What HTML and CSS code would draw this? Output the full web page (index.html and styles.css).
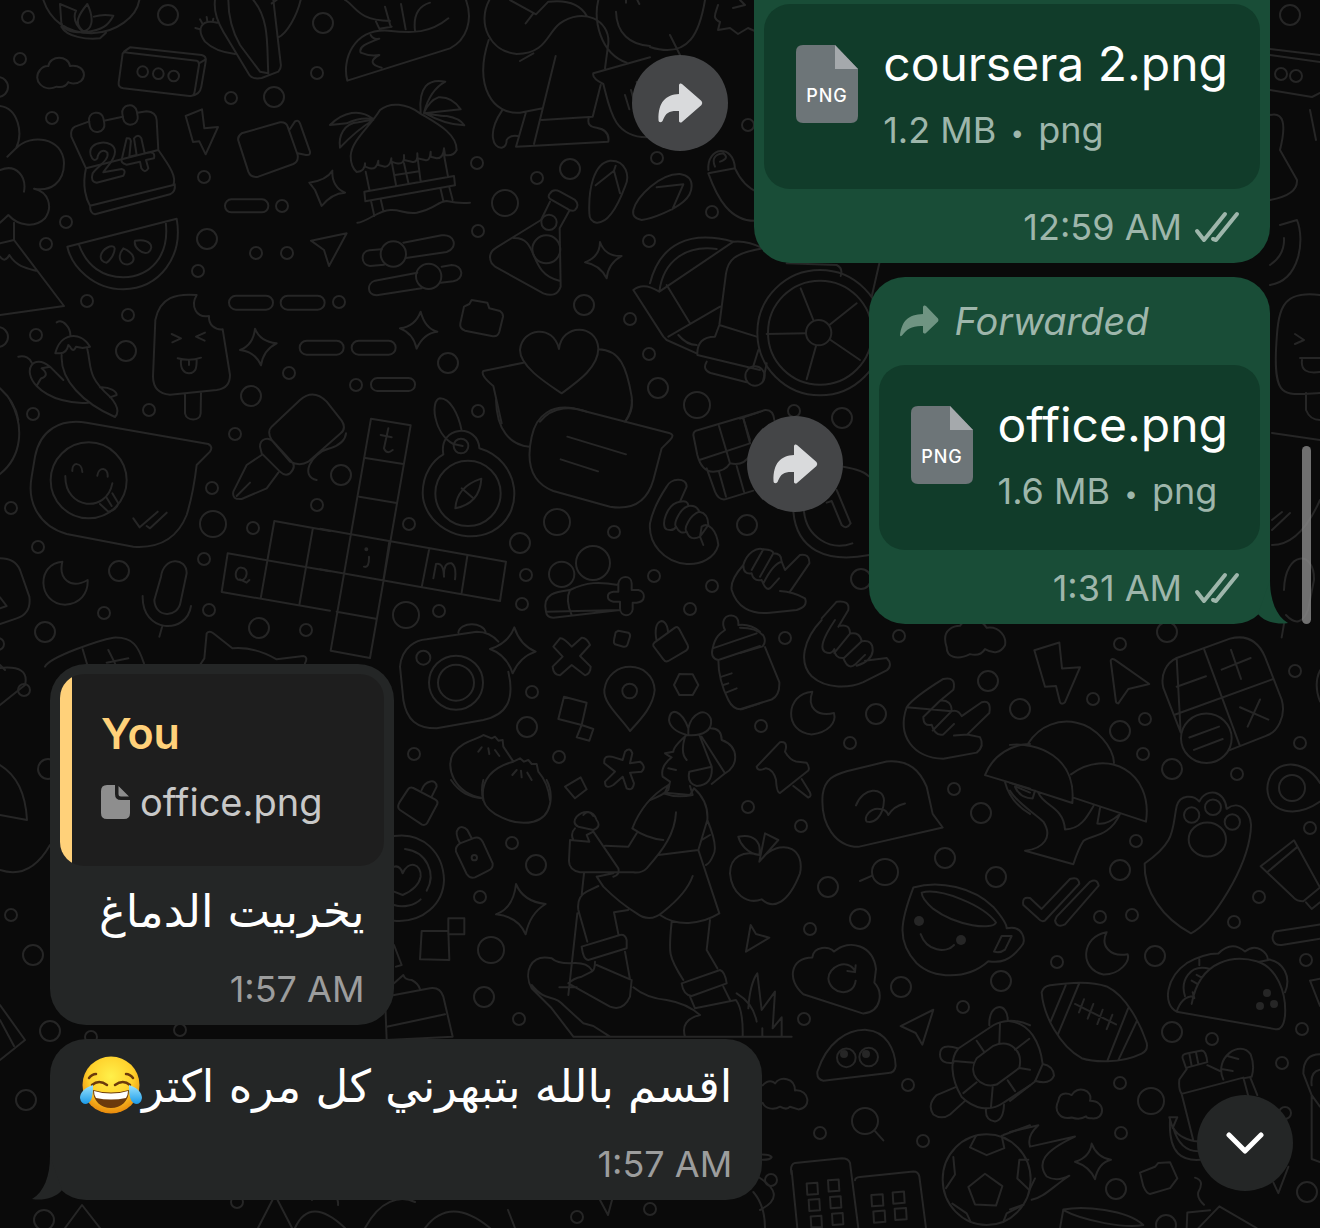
FILE: index.html
```
<!DOCTYPE html>
<html lang="en">
<head>
<meta charset="utf-8">
<meta name="viewport" content="width=device-width, initial-scale=1">
<title>Chat</title>
<link rel="stylesheet" href="styles.css">
</head>
<body>
<svg class="wallpaper" viewBox="0 0 1320 1228" preserveAspectRatio="xMidYMid slice" aria-hidden="true">
  <!-- confetti dots -->
  <g class="dots-small">
    <circle cx="28" cy="17"/><circle cx="20" cy="59"/><circle cx="52" cy="118"/><circle cx="231" cy="98"/><circle cx="204" cy="177"/><circle cx="66" cy="222"/><circle cx="46" cy="244"/><circle cx="198" cy="271"/><circle cx="87" cy="301"/><circle cx="128" cy="315"/><circle cx="36" cy="335"/><circle cx="33" cy="414"/><circle cx="149" cy="410"/><circle cx="289" cy="373"/><circle cx="317" cy="73"/><circle cx="256" cy="253"/><circle cx="287" cy="253"/><circle cx="282" cy="206"/>
    <circle cx="477" cy="163"/><circle cx="537" cy="178"/><circle cx="478" cy="231"/><circle cx="339" cy="302"/><circle cx="356" cy="385"/><circle cx="478" cy="411"/><circle cx="630" cy="319"/><circle cx="649" cy="354"/><circle cx="649" cy="241"/><circle cx="657" cy="158"/><circle cx="712" cy="212"/><circle cx="794" cy="411"/><circle cx="748" cy="125"/>
    <circle cx="235" cy="434"/><circle cx="11" cy="508"/><circle cx="212" cy="488"/><circle cx="253" cy="528"/><circle cx="38" cy="547"/><circle cx="204" cy="559"/><circle cx="104" cy="613"/><circle cx="209" cy="610"/><circle cx="306" cy="630"/><circle cx="317" cy="505"/><circle cx="-2" cy="644"/>
    <circle cx="409" cy="524"/><circle cx="526" cy="575"/><circle cx="522" cy="604"/><circle cx="439" cy="611"/><circle cx="614" cy="532"/><circle cx="654" cy="576"/><circle cx="712" cy="586"/><circle cx="690" cy="609"/><circle cx="532" cy="692"/><circle cx="414" cy="754"/><circle cx="559" cy="757"/><circle cx="512" cy="843"/><circle cx="480" cy="897"/><circle cx="519" cy="1019"/><circle cx="748" cy="807"/><circle cx="801" cy="826"/><circle cx="810" cy="929"/><circle cx="804" cy="1019"/>
    <circle cx="785" cy="638"/><circle cx="899" cy="636"/><circle cx="761" cy="726"/><circle cx="850" cy="743"/><circle cx="954" cy="789"/><circle cx="963" cy="1007"/><circle cx="908" cy="1085"/><circle cx="820" cy="1133"/><circle cx="923" cy="1141"/><circle cx="771" cy="1180"/>
    <circle cx="1120" cy="644"/><circle cx="1093" cy="699"/><circle cx="1145" cy="719"/><circle cx="1143" cy="754"/><circle cx="1136" cy="841"/><circle cx="1295" cy="671"/><circle cx="1300" cy="743"/><circle cx="1237" cy="774"/><circle cx="1310" cy="828"/><circle cx="1259" cy="897"/><circle cx="1100" cy="917"/><circle cx="1132" cy="915"/><circle cx="1234" cy="922"/><circle cx="1057" cy="962"/><circle cx="1306" cy="960"/><circle cx="1212" cy="1039"/><circle cx="1302" cy="1029"/><circle cx="1282" cy="1063"/><circle cx="1120" cy="1083"/><circle cx="1121" cy="1133"/><circle cx="1285" cy="1113"/><circle cx="1281" cy="74"/><circle cx="1296" cy="76"/>
    <circle cx="91" cy="1037"/><circle cx="180" cy="1030"/><circle cx="11" cy="915"/><circle cx="237" cy="1202"/><circle cx="650" cy="1209"/><circle cx="577" cy="1217"/><circle cx="24" cy="690"/>
  </g>
  <g class="dots-medium">
    <circle cx="168" cy="15"/><circle cx="323" cy="23"/><circle cx="274" cy="97"/><circle cx="207" cy="239"/><circle cx="126" cy="351"/><circle cx="251" cy="396"/><circle cx="-2" cy="87"/><circle cx="-2" cy="337"/><circle cx="570" cy="169"/><circle cx="584" cy="305"/><circle cx="448" cy="363"/><circle cx="119" cy="571"/><circle cx="45" cy="632"/><circle cx="259" cy="628"/><circle cx="341" cy="475"/><circle cx="520" cy="543"/><circle cx="527" cy="727"/><circle cx="747" cy="525"/><circle cx="536" cy="865"/><circle cx="484" cy="997"/><circle cx="658" cy="388"/><circle cx="842" cy="418"/><circle cx="861" cy="579"/>
    <circle cx="876" cy="714"/><circle cx="988" cy="681"/><circle cx="1020" cy="709"/><circle cx="981" cy="813"/><circle cx="945" cy="858"/><circle cx="828" cy="887"/><circle cx="996" cy="877"/><circle cx="860" cy="919"/><circle cx="901" cy="987"/><circle cx="1001" cy="981"/><circle cx="1167" cy="632"/><circle cx="1120" cy="731"/><circle cx="1172" cy="769"/><circle cx="1120" cy="870"/><circle cx="1155" cy="956"/><circle cx="1172" cy="1032"/><circle cx="1116" cy="1189"/><circle cx="1307" cy="1192"/><circle cx="1166" cy="1225"/><circle cx="1290" cy="15"/><circle cx="48" cy="769"/><circle cx="33" cy="955"/><circle cx="50" cy="1031"/><circle cx="44" cy="1220"/><circle cx="26" cy="1100"/>
  </g>
  <g class="dots-large">
    <circle cx="505" cy="203"/><circle cx="213" cy="524"/><circle cx="697" cy="405"/><circle cx="557" cy="522"/><circle cx="406" cy="615"/><circle cx="491" cy="950"/><circle cx="885" cy="872"/><circle cx="865" cy="1121"/><circle cx="1151" cy="1101"/><circle cx="1292" cy="788"/>
  </g>

  <!-- top left: lotus, game pad, cactus, calendar, melon, ice lolly, peppers -->
  <g transform="scale(.33333)">
    <path d="M130 0C150 60 200 100 275 100C350 98 410 50 418 0M180 12L184 68C190 90 215 98 250 97C220 70 220 50 228 32ZM262 12C235 45 220 70 250 94C275 90 285 60 262 12ZM282 50C300 44 320 44 340 47C325 75 310 90 255 97M184 80C200 110 260 120 300 115L318 98"/>
    <path d="M368 160Q372 155 385 158L590 182Q598 185 597 195L584 275Q582 290 568 288L370 265Q354 262 356 248ZM372 155L390 142L605 165Q620 168 617 185L604 260Q600 285 572 288M597 190L617 178"/>
    <circle cx="428" cy="215" r="16"/><circle cx="475" cy="221" r="16"/><circle cx="521" cy="228" r="16"/>
    <path d="M145 198C150 165 205 165 210 198C265 190 265 255 215 250Q205 248 205 246Q195 265 170 260C130 278 95 240 120 210Q130 197 145 198Z"/>
    <path d="M645 0C640 40 655 70 670 95L745 220Q755 240 785 234L835 215Q845 205 842 190L820 0M685 0C685 60 700 100 720 135L780 215L805 220C800 140 810 60 760 0M815 10L830 0M902 0C890 50 860 100 835 112M652 68C600 55 590 90 615 125Q645 155 705 162M600 88l-14-4M608 72l-8-14M622 64l-2-13M638 66l2-10"/>
    <path d="M268 364L225 380Q210 388 214 410L258 505L475 450L470 360Q468 336 440 334L412 338M312 362L368 350M258 505C245 560 260 600 270 617L520 555C530 530 510 500 475 450M270 617Q270 640 285 643L510 583Q528 575 524 552"/>
    <rect x="268" y="338" width="44" height="58" rx="21" transform="rotate(-10 290 367)"/><rect x="368" y="316" width="44" height="58" rx="21" transform="rotate(-10 390 345)"/>
    <path d="M272 465C260 420 345 415 345 455C345 480 320 500 310 517L365 507Q380 510 370 527L290 548Q270 545 278 520C290 500 330 480 322 458C310 445 295 455 292 475Q280 488 272 465ZM380 415Q395 412 392 430L388 470L410 465L402 415Q415 400 424 415L434 460Q468 450 462 475L438 480L445 505Q435 522 424 505L420 485L380 494Q360 490 366 475Z"/>
    <path d="M0 318C55 325 70 400 48 445L22 470M48 445C90 400 190 410 192 490C192 550 150 575 102 566C145 575 160 620 135 655C105 685 55 678 25 645Q15 655 0 668M0 510C50 490 80 530 72 575M42 668V720L192 918L0 945M0 730L42 720M0 770Q15 790 28 765C50 800 80 805 108 812"/>
    <path d="M557 348L606 328L613 385L654 381L617 463L598 424L579 426ZM716 425Q710 410 725 400L840 367Q858 365 863 380L893 465Q896 485 880 492L775 530Q752 534 745 515ZM868 390L885 364Q895 358 900 370L930 455Q932 467 918 465L893 460"/>
    <rect x="675" y="598" width="130" height="39" rx="19"/><rect x="687" y="887" width="132" height="42" rx="21"/><rect x="842" y="887" width="132" height="42" rx="21"/><rect x="899" y="1022" width="132" height="42" rx="21"/>
    <path d="M202 740L530 656C550 770 480 865 370 868C280 868 215 800 202 740ZM236 732C260 800 310 832 370 832C450 830 510 770 497 665M302 770C305 745 340 730 344 745C345 765 325 785 320 788Q302 785 302 770ZM370 745C350 770 360 795 385 793C410 785 405 760 370 745ZM405 722C400 740 425 765 445 757C465 740 450 715 405 722Z"/>
    <path d="M590 885C570 920 590 955 627 948C625 975 645 990 668 988L690 1125Q690 1165 650 1170L510 1184Q460 1180 459 1130L466 960C480 890 530 880 590 885ZM555 1182V1240C560 1265 600 1265 602 1240L603 1178M515 1002L543 1015L517 1027M615 998L588 1010L614 1022M533 1075Q570 1085 603 1073M543 1080C540 1110 555 1120 567 1120C590 1118 590 1100 590 1078M567 1080V1095"/>
    <path d="M765 986Q780 1025 830 1030Q790 1050 783 1096Q765 1055 720 1050Q760 1035 765 986Z"/>
    <path d="M170 967C190 955 212 985 211 1007M166 1060C180 1000 240 990 270 1040L248 1044L228 1040Q220 1060 210 1040L205 1035Q200 1060 180 1060ZM185 1065C180 1140 250 1210 345 1251Q365 1230 330 1190C260 1130 275 1100 262 1048M55 1070C75 1065 90 1075 95 1088M150 1100C100 1060 65 1110 110 1158Q125 1130 125 1135Q150 1125 125 1105L150 1100L190 1140M110 1158C150 1200 220 1212 265 1208M300 1162C330 1160 350 1175 350 1185L330 1192M0 1165Q45 1205 55 1260"/>
  </g>

  <!-- top middle: fox tail, hut, sliders, flask, kneeling figure, heart bubble -->
  <g transform="translate(320) scale(.33333)">
    <path d="M75 0C110 20 110 60 210 63M195 20L212 80M243 12L257 88M168 65L178 86L215 80M330 8C290 20 280 50 285 92M438 0C460 60 440 120 390 145L82 242C65 180 100 85 205 92C280 100 330 100 385 55M152 105Q160 120 178 116C140 130 115 140 122 158Q150 170 178 165C150 180 150 195 185 203"/>
    <path d="M508 0C470 70 510 155 590 162C680 160 680 100 720 70C790 20 870 60 865 130L855 205M570 0L648 43L685 5Q770 -5 800 47M640 40L617 70M640 160L600 183M506 120C460 260 520 345 600 338L668 325M707 168L642 432M546 332C500 400 520 445 545 443Q560 440 560 420Q570 405 592 408M617 340L588 440L865 425Q870 390 830 383Q800 380 806 355M665 360L818 350L842 255M835 0C820 60 840 160 920 188M820 220L990 172M820 220Q815 235 850 252C870 330 880 410 980 412M888 35C890 100 930 135 990 138M915 285L928 328M933 270L943 305M950 246L955 260M918 0V8M952 0L958 12"/>
    <path d="M92 468C95 420 150 380 180 330C210 305 260 310 300 340C350 370 410 400 410 450Q400 470 375 465L372 445Q370 475 350 475L332 470V455Q330 485 315 480L292 475V460Q295 490 275 485L252 480V465Q255 495 230 490L214 485V475Q210 500 195 500L175 495V482Q170 510 150 505L135 500V490Q135 515 110 516Q92 500 92 468ZM137 515L148 568M215 485L228 555M252 490L265 548M293 475L302 545M372 465L384 530M225 525L298 514M133 575L402 528L405 556L136 604ZM153 602L163 648M182 598L190 632M362 568L370 602M388 562L398 600M112 668Q125 668 160 648C230 610 240 645 290 638C350 625 350 605 380 603Q420 612 450 608M30 375C70 335 120 325 160 357Q120 350 80 370L30 375M30 375L60 372M60 443C55 410 70 370 115 367Q150 360 160 360Q110 390 60 443ZM302 338C295 260 325 235 376 245Q330 270 312 338M312 338Q330 300 355 292C390 290 410 310 422 328L312 340Q380 350 380 348Q420 355 433 376C390 375 350 360 312 338"/>
    <path d="M185 748L148 751C120 755 122 795 150 798L192 794M250 728L365 706C405 700 415 745 380 756L258 774M292 818L165 842C140 850 140 885 170 886L305 865M365 800L395 795C430 795 435 838 400 844L362 848"/><circle cx="220" cy="762" r="38"/><circle cx="326" cy="829" r="38"/>
    <path d="M690 580Q700 565 720 575L765 600Q780 615 765 630Q755 636 740 625L695 600Q680 592 690 580ZM690 605L663 660L530 742Q500 760 515 790L525 800L670 880Q710 895 722 860L719 685L748 632M580 714C660 710 620 820 718 842"/><circle cx="687" cy="667" r="23"/><circle cx="679" cy="748" r="42"/>
    <path d="M808 640C805 570 820 490 870 482C920 480 930 530 915 560C900 600 870 670 830 668Q808 665 808 640ZM827 556L882 512L900 580M887 497L882 512M840 726Q855 770 905 768Q865 790 860 835Q840 795 795 787Q840 770 840 726ZM302 935Q315 985 352 995Q310 1000 290 1046Q280 1000 240 985Q285 980 302 935ZM37 512Q35 560 75 578Q35 580 5 618L-15 570L-32 548Q20 540 37 512M-27 722L80 700L27 798L12 750Z"/>
    <path d="M432 920L448 912L455 900L502 908L508 925L540 933Q550 940 549 950L538 995Q533 1012 515 1008L435 992Q418 985 421 970Z"/>
    <path d="M725 1180C680 1150 600 1100 600 1050C605 985 700 970 717 1047C725 970 830 970 835 1045C835 1100 780 1140 725 1180ZM835 1048C900 1050 920 1100 935 1190Q940 1230 915 1265M610 1088L490 1113Q480 1125 520 1158L545 1270M660 1265C700 1215 760 1220 800 1235"/>
    <rect x="95" y="1022" width="132" height="42" rx="21"/><rect x="153" y="1134" width="132" height="39" rx="19"/>
  </g>

  <!-- left: smile bubble, pen, crescent, microphone, crossword -->
  <g transform="translate(0 400) scale(.33333)">
    <path d="M105 170C120 90 180 55 260 68L625 132Q640 140 630 155L590 195Q580 280 560 345C530 420 470 445 400 440L200 402C120 380 80 310 95 230Z"/><circle cx="266" cy="241" r="114"/>
    <path d="M217 213C215 185 245 185 247 216M292 227C295 200 325 200 323 230M196 228C195 330 320 340 337 250M300 312L325 335Q350 330 355 310L337 280M318 290L335 318M400 355L419 382L473 335M440 378L450 385L500 338"/>
    <path d="M187 485C110 490 110 610 195 614C240 612 265 580 263 540C210 570 175 535 187 485ZM483 530C490 470 560 470 560 520L542 605C535 655 465 655 463 600ZM428 588C425 700 560 705 573 618M487 678L478 710M0 475Q45 475 60 510L88 590Q95 640 50 655L0 672M0 592L20 618L0 625M30 0C75 80 65 170 0 222M0 795L15 810"/>
    <path d="M900 0L815 80Q800 95 815 120L870 185Q900 200 925 185L1022 100Q1040 85 1025 62L980 5Q940 -35 900 0M780 140C780 115 805 110 820 125L875 185Q890 200 870 220Q855 230 840 215L785 160ZM785 165L740 195L700 275Q695 300 725 297L800 265L835 218M750 248L710 288M990 145C930 160 900 230 950 240M990 145Q1035 130 1038 100"/>
    <path d="M683 460L990 514M665 576L990 632M683 460L665 576M823 363L782 596M938 388L898 615M823 363L990 393M720 540C700 540 705 500 725 503C750 505 740 545 720 540ZM720 538L740 548L748 540M600 795L613 775L620 700Q628 690 640 700L697 745C750 740 790 755 830 778L910 768Q925 770 915 790M135 800C150 770 300 720 340 713C400 710 415 740 432 790M248 748L262 795M325 750L345 790M320 788L385 775"/>
  </g>

  <!-- centre: crossword, compass, note bubble, camera, hands, pin, dumplings -->
  <g transform="translate(320 400) scale(.33333)">
    <path d="M153 56L272 76L150 774L32 752ZM136 174L250 192M118 290L230 309M0 386L558 485L540 603L0 508M208 425L190 542M327 450L305 562M442 468L425 578M50 635L168 656M205 85L192 145Q200 165 218 150M182 105L215 112M132 500Q148 505 147 470M340 535L348 492Q370 485 372 530M372 530Q370 485 395 490Q410 500 405 538"/><circle cx="139" cy="448" r="3"/>
    <circle cx="444" cy="280" r="98"/><circle cx="423" cy="138" r="22"/>
    <path d="M370 163C355 75 475 70 478 145C600 180 620 340 515 395C420 440 310 370 308 280C308 220 340 180 370 163ZM425 92C415 40 390 -5 360 -5C330 0 340 100 400 132L428 138M484 236Q410 260 406 325Q480 310 484 236ZM425 265L460 295"/>
    <path d="M635 110C650 40 700 15 760 25L1050 100Q1065 105 1050 120L1025 145L1000 240C980 310 930 330 870 320L700 273C640 250 615 200 635 110ZM742 110L918 163M722 178L834 214M528 0C530 90 570 135 628 140M935 0Q940 30 918 62"/>
    <path d="M1120 105Q1120 92 1135 90L1320 35M1120 105L1132 165Q1145 215 1180 215Q1215 215 1230 190Q1270 200 1290 165M1138 180L1290 130M1197 78L1230 190M1270 55L1290 120M1160 205L1185 275Q1195 300 1215 298L1300 272M1197 215L1218 290M1250 198L1272 275"/>
    <circle cx="725" cy="523" r="38"/><circle cx="819" cy="489" r="51"/>
    <path d="M678 635C665 580 710 575 750 570C800 545 840 545 895 555M900 630L700 653Q680 653 678 635ZM750 570Q735 600 755 645M895 575V550C900 525 935 525 935 550V570H955C978 575 978 605 950 608H938V628C935 652 900 652 900 625V605H880C858 600 858 578 880 575Z"/>
    <path d="M1040 260C1050 235 1100 230 1100 260L1080 305C1040 310 1020 380 1040 388Q1060 395 1068 380Q1080 405 1100 395Q1110 425 1140 410L1145 380C1165 365 1190 390 1195 435C1185 475 1140 495 1100 492C1030 485 985 430 990 370Q1000 320 1040 260ZM1080 305Q1105 300 1105 318C1080 325 1060 370 1068 380M1105 318Q1130 315 1138 335C1110 345 1090 385 1100 395M1138 335Q1165 340 1165 375L1140 410M1140 410L1150 435"/>
    <path d="M240 800C245 740 290 720 320 718L470 695Q510 695 535 725M415 698C420 665 490 665 497 697M565 815C585 900 560 945 490 960L350 985C290 985 260 960 250 900L240 800M583 682Q600 735 647 755Q600 770 578 820Q560 765 510 747Q565 730 583 682Z"/><circle cx="310" cy="773" r="21"/><circle cx="408" cy="848" r="81"/><circle cx="408" cy="848" r="54"/>
    <path d="M700 740L720 715Q730 712 755 740L785 713Q800 712 810 735L780 768L812 800Q812 820 795 826L755 795L720 826Q700 825 698 800L728 770ZM895 692L925 698Q932 702 930 710L922 735Q918 742 910 740L885 733Q880 728 882 720L887 697ZM1003 728L1065 683Q1073 678 1078 688L1103 735Q1107 745 1098 752L1045 783Q1036 788 1030 778L1000 738Q998 732 1003 728ZM1010 722C995 655 1040 645 1044 695M1078 822L1118 823L1135 855L1118 885H1078L1062 855ZM930 993C900 950 850 910 853 870C865 775 1000 780 1004 870C1000 920 960 960 930 993ZM732 890L800 908L785 975L715 957ZM785 975L820 987L808 1022L770 1012Z"/><circle cx="929" cy="873" r="22"/>
    <path d="M490 1195C400 1180 375 1100 400 1060C430 1020 470 1020 490 1005L515 1015L525 1010L535 1022L548 1020L550 1040L580 1085C520 1100 480 1140 490 1200M580 1085L600 1075L612 1085L625 1080L635 1092L650 1092L655 1115Q685 1150 690 1200M485 1042L475 1055M505 1045L508 1062M525 1050L538 1068M590 1110L577 1125M603 1112L605 1132M622 1118L635 1140M735 1160L782 1132L800 1168L765 1195Z"/>
    <path d="M908 1080L915 1055Q930 1040 937 1060L930 1090L960 1085Q980 1100 965 1115L930 1118L942 1150Q938 1175 920 1165L908 1130L880 1155Q855 1170 855 1145L885 1115L853 1090Q850 1065 875 1070Z"/>
    <path d="M1105 985C1085 930 1050 920 1047 960Q1050 990 1100 1005C1150 1010 1180 990 1172 955C1155 920 1115 940 1105 985V1005M1172 985Q1205 985 1205 1020C1260 1040 1255 1100 1215 1120L1145 1010M1100 1005Q1060 1040 1060 1055L1035 1060Q1050 1070 1055 1072Q1020 1100 1028 1130L1050 1145L1045 1170Q1030 1185 990 1200M1095 1010Q1080 1060 1100 1080M1138 1005L1175 1100Q1180 1155 1130 1158Q1100 1150 1108 1115L1175 1100M1110 1158L1118 1185Q1070 1195 1030 1180M1215 1120L1175 1152M1045 1105L1068 1110"/>
    <path d="M1178 745C1185 710 1200 700 1215 690C1190 640 1260 630 1255 675Q1290 670 1320 695M1178 745Q1170 775 1195 780L1320 738M1178 745L1310 700M1195 780C1195 830 1210 870 1225 900Q1240 930 1265 928L1320 910M1205 830L1235 820M1210 855L1225 850M1218 878L1250 865"/>
  </g>

  <!-- hiker, apple, padlocks, vinyl heart -->
  <g transform="translate(380 780) scale(.33333)">
    <path d="M58 68L84 28Q90 20 100 24L165 58Q175 63 172 72L142 128Q136 138 126 134L60 90Q50 82 58 68ZM125 30C135 0 170 -5 170 20L155 50M228 215Q225 200 240 190L285 173Q300 170 308 185L338 250Q340 265 325 272L285 292Q270 297 260 282ZM240 190C215 145 245 130 262 150L275 175M42 168C130 155 190 220 192 300C190 370 130 430 42 422M75 207C140 215 170 280 140 332M42 375C70 385 105 375 122 358M42 260Q60 255 68 280C85 240 125 250 122 290Q115 325 68 345L42 335"/><circle cx="283" cy="233" r="8"/>
    <path d="M408 312Q430 365 497 372Q450 400 437 463Q415 410 348 403Q400 385 408 312ZM125 453H205L208 540L120 538ZM205 415H253V463H205ZM42 495L65 555L48 560M42 610L70 585Q75 600 95 600Q115 610 120 628M15 650L150 625Q180 620 190 650L218 770L20 780ZM20 740L195 703M213 0C240 40 270 50 305 55M310 60C320 100 400 140 460 125C520 110 520 40 500 0M310 60Q302 30 310 0"/>
    <path d="M865 15Q790 60 757 145Q800 175 850 180M888 97C885 160 850 210 800 265Q785 280 760 277H600Q565 270 567 240L570 180L628 185L620 165L640 155L715 265Q720 285 700 290M770 160L745 200L675 197M865 15L855 38L930 45L942 25C970 50 985 80 982 120L955 210L835 225M955 210L1018 400C960 435 890 440 840 405M982 120Q1015 200 1000 225Q990 250 978 255M968 178L990 165M590 110C610 90 640 90 650 120Q665 140 640 150L595 140Q575 130 590 110ZM610 105Q625 85 640 108M585 145Q570 160 580 180M650 290L670 320Q720 370 770 400Q810 430 850 395Q920 340 938 288M650 290L700 280M655 318L620 335Q590 350 595 390L622 485M612 280L605 345M592 400L565 645M702 397L745 390M702 397L715 462M605 500L720 465Q735 462 740 480V505L625 540Q610 540 605 500ZM735 515L750 598L650 555M645 545Q645 570 635 575L605 590Q580 595 565 610L690 680Q730 695 750 650L755 600M538 622H590M635 570Q620 545 570 550Q530 550 515 535C450 520 430 580 455 625L515 685L580 770M455 615C500 670 520 640 550 675L610 730L640 738L690 770M760 622Q800 655 860 660Q920 670 960 705Q900 720 915 770M875 425C865 520 865 530 910 600M990 420L980 510L1012 565M905 610L1020 570Q1035 575 1040 610L935 648Q910 645 905 610ZM930 650L945 685L1068 660Q1090 690 1088 770M1030 620L1050 660M580 770H1235M1130 725Q1120 670 1070 640M1105 685Q1110 610 1132 580L1145 690L1185 635L1178 745L1205 712L1205 770M1147 745V770"/>
    <path d="M1138 245L1155 160L1195 180ZM1138 225C1100 220 1080 190 1075 170C1120 160 1145 185 1138 225C1090 210 1050 230 1050 280C1055 340 1100 375 1145 358C1180 390 1225 370 1260 280C1275 210 1215 175 1155 225M1112 435L1128 462L1168 473L1098 515Z"/>
  </g>

  <!-- bottom right of centre: hand signs, speech squiggle, cup, cloud, turtle, ball, buildings -->
  <g transform="translate(740 620) scale(.33333 .3878)">
    <path d="M0 20Q50 20 70 40Q80 55 68 68L0 85M75 70L118 160Q120 195 95 205L0 230M245 0C190 50 175 110 215 145C260 180 330 175 370 160L440 130Q460 115 440 98L375 105M285 0Q230 70 255 82Q275 90 283 75Q285 100 310 98Q325 130 345 115L375 90M300 15Q330 10 330 35L283 85M330 35Q360 30 365 55L312 98M365 55Q400 50 398 80Q395 105 350 118"/>
    <path d="M217 185C135 190 130 290 215 295C265 290 290 265 282 240C230 250 200 225 217 185ZM500 225Q520 200 610 152Q650 145 640 180L600 208L550 250Q550 275 575 270Q585 300 610 295L642 268M600 208Q635 205 635 235L578 285M635 235Q655 230 665 248L725 212Q755 205 748 240L682 295L720 302Q735 325 710 342L610 358C520 355 470 300 500 225ZM642 298L682 295"/>
    <path d="M620 70C600 20 650 15 660 15C670 0 720 -10 740 20C780 15 800 45 795 65Q775 95 735 75Q720 95 690 88C650 105 620 95 620 70ZM50 378L120 315Q140 312 138 330L135 340Q150 362 168 365L200 368Q210 380 205 388L120 446Q110 446 108 412Q100 385 78 382Q52 392 50 378ZM160 428L205 458Q215 455 210 445L185 410"/>
    <path d="M248 450C255 410 280 400 320 390L440 365C510 360 540 390 560 430L578 500L608 535L355 585C290 585 240 530 248 450ZM348 478C370 430 430 430 432 465C430 510 400 525 380 520C370 510 390 480 425 488Q440 490 445 503Q460 480 495 473"/>
    <path d="M735 400C760 345 820 320 870 320M735 400L870 435M795 418Q810 470 870 500M828 430L870 445M360 673L395 660"/>
    <path d="M520 690C600 670 700 690 760 740Q800 780 800 795C850 785 860 830 845 840C810 880 780 885 745 880C680 930 580 925 530 885C470 830 480 780 520 690ZM545 703C600 690 730 735 768 780C760 800 650 790 580 745Q545 720 545 703ZM542 810C560 855 620 860 642 838M785 815H815L795 850Q780 860 762 855Z"/>
    <path d="M217 870C220 840 270 840 282 855C330 820 400 840 408 900L403 935C430 960 425 1010 370 1015L190 965C140 930 150 870 217 870ZM345 905C320 870 265 895 265 925C270 965 340 975 347 930M347 890L345 908L322 905M482 1047L580 1005L547 1095L527 1065Z"/>
    <path d="M232 1165C260 1090 320 1055 380 1057C440 1060 465 1110 467 1150Q465 1168 445 1168L250 1188Q230 1185 232 1165ZM68 1200C90 1180 105 1195 105 1195C120 1175 165 1180 165 1213C210 1210 215 1260 175 1262L150 1255Q140 1265 120 1255C100 1265 75 1260 68 1245"/><ellipse cx="319" cy="1129" rx="28" ry="24"/><ellipse cx="386" cy="1127" rx="28" ry="24"/>
    <path d="M405 1318L430 1342M155 1430Q148 1405 165 1400L305 1388Q325 1388 330 1400L355 1568M155 1420L172 1568M345 1445Q345 1438 360 1436L520 1422Q535 1422 538 1435L558 1568M200 1453L232 1451L234 1480L202 1482ZM264 1445L296 1443L298 1472L266 1474ZM206 1495L238 1493L240 1522L208 1524ZM270 1488L302 1486L304 1515L272 1517ZM212 1538L244 1536L246 1566L214 1566ZM276 1531L308 1529L310 1558L278 1560ZM394 1483L428 1481L430 1510L396 1512ZM458 1476L492 1474L494 1503L460 1505ZM400 1525L434 1523L436 1552L402 1554ZM464 1518L498 1516L500 1545L466 1547Z"/>
    <path d="M870 1045C820 1025 780 1035 760 1045L655 1105C630 1130 630 1180 665 1230C700 1260 750 1270 790 1245L870 1200M710 1130L760 1098C810 1080 850 1110 838 1155L770 1198C720 1210 680 1170 710 1130ZM780 1040L778 1090M710 1085L732 1113M640 1137L703 1142M670 1220L710 1192M753 1255L758 1205M825 1215L803 1187M870 1160L838 1155M825 1108L868 1080M748 1045C745 985 805 985 803 1032M655 1105Q600 1090 600 1120Q600 1145 640 1142M645 1205L590 1225Q560 1250 580 1275Q605 1290 630 1275L675 1240M738 1262Q735 1290 765 1293Q790 1290 792 1250"/>
    <ellipse cx="740" cy="1443" rx="132" ry="117"/>
    <path d="M735 1428L787 1460L768 1510L705 1507L685 1462ZM708 1330L690 1360L740 1380L793 1362L785 1330M640 1385L645 1430L618 1465M637 1505L680 1530L692 1552M790 1552L800 1530L850 1508M790 1328L870 1303M40 1475Q75 1510 75 1568M68 1378Q90 1378 95 1385Q90 1392 68 1392"/>
  </g>
  <g class="filled">
    <circle cx="919" cy="921" r="5"/><circle cx="961" cy="940" r="5"/><circle cx="844" cy="1054" r="4"/><circle cx="866" cy="1054" r="4"/><circle cx="1267" cy="993" r="4"/><circle cx="1260" cy="1006" r="4"/><circle cx="1274" cy="1004" r="4"/>
  </g>

  <!-- right: bolt, calculator, mushrooms, paw, ticks, football, taco, bottle -->
  <g transform="translate(1010 620) scale(.33333 .3878)">
    <path d="M73 78L148 58L156 125L210 122L165 212Q155 220 150 212L138 170L105 172ZM302 105Q305 97 315 103L418 165L355 178L325 215Q317 215 317 205Z"/>
    <path d="M500 98L660 48C720 35 750 65 765 95L815 205C830 250 800 290 770 298L655 337M512 290L460 175C450 140 470 110 500 98ZM583 77L690 325M492 245L787 153M500 172L588 145M635 128L722 98M663 77L693 152M690 225L775 257M750 205L713 275M538 303L627 275M552 335L638 307"/><ellipse cx="589" cy="305" rx="76" ry="64"/>
    <path d="M55 318C90 270 150 255 200 265C260 275 310 330 312 368M0 322C80 315 200 350 187 472L0 420M183 398C290 330 430 390 408 520L190 458M15 430Q30 460 68 460L75 440M85 445C100 480 160 480 165 540C210 540 230 510 250 480M270 485L262 525Q290 530 330 500C300 560 240 555 220 570Q205 590 190 630L45 595C100 590 130 560 100 520C60 490 20 470 0 440"/>
    <path d="M404 628C500 570 485 540 500 480C510 450 550 450 568 468C590 430 645 440 650 487C690 460 730 500 722 545C710 640 610 780 543 808C460 770 400 700 404 628Z"/><ellipse cx="545" cy="503" rx="23" ry="20"/><ellipse cx="609" cy="483" rx="24" ry="20"/><ellipse cx="667" cy="521" rx="23" ry="20"/><ellipse cx="592" cy="566" rx="56" ry="44"/>
    <path d="M930 420C880 350 775 360 772 435C775 500 860 510 930 468M752 635L852 568L930 690L880 725Q860 725 850 715ZM775 648L862 585M888 728L905 745L930 728M40 735Q35 712 60 717L95 745L180 668Q205 660 208 680L105 775Q95 780 85 770ZM140 765L240 675Q262 665 266 685L165 785Q140 795 135 775ZM930 785L795 803C780 820 790 840 815 838L930 822"/>
    <path d="M290 805C215 815 205 900 280 914C330 915 360 880 353 862C300 870 270 840 290 805ZM95 960Q100 945 120 942C180 935 240 930 290 945C350 970 390 1040 410 1090Q415 1110 395 1118C330 1145 250 1140 215 1130C150 1100 100 1020 95 960ZM167 942L122 1035M207 938L143 1070M355 1000L292 1137M380 1035L325 1135M195 990L318 1043M222 978L207 1012M250 990L233 1028M278 1005L262 1042M307 1018L290 1055"/>
    <path d="M500 1010C455 990 470 920 530 885Q580 860 625 860Q665 825 705 855C740 830 775 860 773 875C820 880 845 920 825 960M545 990C570 870 680 865 740 880C800 895 830 960 825 1020Q820 1060 795 1055L500 1010Q515 970 550 970M600 900C540 885 510 930 525 970M568 890V875M545 930L562 938M560 915L575 922M745 882L775 877M548 960L553 975"/>
    <path d="M0 1035C60 1040 90 1090 98 1145L75 1190L0 1240M98 1145Q130 1150 132 1175Q120 1200 75 1188M145 1240C150 1210 185 1225 185 1225C200 1200 250 1210 240 1240C290 1240 285 1290 245 1285Q230 1285 228 1280Q210 1290 185 1283C150 1290 130 1265 145 1240ZM245 1350Q260 1385 303 1392Q265 1400 255 1442Q240 1410 195 1397Q240 1385 245 1350Z"/>
    <path d="M0 1320L85 1303Q50 1330 60 1358L195 1332C100 1370 80 1400 110 1435Q140 1450 178 1433C130 1460 100 1490 65 1495M55 1392H28L22 1440L58 1470L75 1440M0 1520L40 1508M150 1568L160 1520C220 1510 350 1520 400 1560M160 1522C220 1550 350 1570 400 1560"/>
    <path d="M518 1130Q515 1120 530 1118L575 1110Q588 1110 592 1140L528 1155ZM538 1118L545 1150M558 1115L565 1145M530 1158L508 1185Q505 1210 515 1222L550 1342M592 1148L630 1163M515 1222L700 1180L715 1228M720 1178L742 1225M640 1185C610 1130 690 1080 722 1120Q735 1150 725 1178L700 1182M655 1125L685 1132M635 1158L668 1163M478 1282H502L488 1310ZM480 1290C475 1380 520 1395 570 1392M490 1310Q510 1370 565 1370M490 1310Q510 1340 565 1345M390 1425L435 1410L445 1400L480 1398L502 1440L480 1465L420 1480Q410 1480 400 1460ZM555 1438Q585 1445 565 1475Q560 1490 582 1508M530 1568L532 1528L600 1522M565 1568L628 1512L740 1568M835 1410L805 1478L790 1450M930 1120Q880 1120 880 1170L905 1225V1390L930 1398M905 1225L930 1255M905 1200Q900 1165 930 1160M900 930L930 995M930 925L900 930M930 130Q910 165 930 210M815 45L822 10"/>
  </g>

  <!-- slippers, wheelchair, hands, dial -->
  <g transform="translate(600 150) scale(.33333)">
    <path d="M100 180C110 140 180 70 240 72C290 80 280 130 250 155C220 180 160 205 125 210Q95 205 100 180ZM170 112L250 103L217 178M325 60C320 -10 400 -20 405 55L325 70C350 140 390 220 475 212M405 55Q430 110 475 127M345 50Q330 15 370 10Q390 25 360 35"/>
    <path d="M150 400C180 280 270 240 400 275Q440 270 490 295M178 425C190 330 260 285 350 297M100 420Q130 395 178 425L400 275M100 420L190 560L200 570L290 610M200 405L270 520M205 560L360 470M235 555Q260 585 290 585M490 295C400 310 385 330 378 370L358 525L345 560Q290 560 292 615L480 660M358 525L470 560M320 635Q305 660 335 670L440 697M475 600L458 655M500 640L490 690M560 340L710 345Q730 355 722 378M838 340L815 440"/>
    <circle cx="656" cy="548" r="38"/><circle cx="465" cy="678" r="29"/><circle cx="660" cy="548" r="188"/><circle cx="660" cy="548" r="156"/><path d="M640 510L602 415M688 525L770 460M692 570L780 630M648 588L620 688M618 550L500 552"/>
    <path d="M420 806L495 780Q520 778 523 810M430 805L450 880"/>
    <path d="M430 1245C440 1210 470 1190 490 1198Q520 1200 520 1210Q545 1210 545 1235L555 1260L600 1215Q630 1210 628 1240L570 1325M430 1245Q390 1290 395 1320C410 1370 450 1395 510 1388L590 1380Q625 1370 615 1345Q580 1325 540 1323M430 1245Q430 1275 455 1270Q460 1295 485 1290Q500 1330 515 1310L537 1285M490 1198L455 1260M520 1210L480 1280M545 1235Q520 1240 490 1300"/>
    <path d="M580 1085C590 1200 680 1240 808 1215M612 1085C620 1160 690 1205 757 1180M680 1058L695 1053L725 1125Q740 1140 752 1120L710 1020M730 950Q790 960 808 980"/>
    <path d="M665 1405L710 1355Q750 1350 745 1380L715 1430"/>
  </g>

  <!-- top right edge and far left edge -->
  <path d="M1270 49L1320 55M1270 55L1320 62M1270 90L1312 97L1320 93M740 0L745 5L733 8M718 5C715 15 712 18 720 22L718 30L730 28L738 34L748 28L757 32M705 0C700 30 690 60 650 47M670 35L680 55M1270 115Q1290 110 1280 150L1297 180Q1298 195 1270 200M1310 110L1316 140M1270 285C1300 280 1305 240 1297 220L1280 225M1270 265Q1285 255 1284 238M1320 295C1280 290 1278 310 1276 350C1274 400 1285 395 1320 393M1306 393V410Q1310 420 1320 420M1295 334L1304 340L1295 344M1300 358L1320 358M1302 360Q1300 375 1320 372M1272 433L1320 440M1320 500Q1300 545 1272 545M1272 520L1282 512M1272 530L1290 513M1284 590C1285 550 1315 550 1314 580L1308 610Q1300 630 1286 615"/>
  <path d="M0 668Q30 665 25 685L0 705M0 765Q25 780 27 820L0 815M0 870Q30 880 50 845M0 1005L25 1040L0 1060M0 1020L14 1046M65 1228L82 1205L100 1228M258 1228L275 1195L292 1228M295 1228Q310 1195 345 1228M312 1200C312 1185 340 1190 338 1205M365 1228C380 1200 400 1195 415 1202M425 1228Q450 1195 490 1228M508 1210L515 1228M600 1200L608 1215L612 1200M755 1175Q790 1195 760 1210"/>
</svg>

<main class="chat">
  <article class="row sent">
    <button class="forward" type="button" aria-label="Forward">
      <svg class="share" viewBox="0 0 46 40"><path d="M1.500 37C1 19 9 11.500 22 11V2C22 .5 24 0 25 1L44.500 18Q46 20 44.500 22L25 39C24 40 22 39.500 22 38V28C13 27.500 9 29 6 37C5 40 1.500 40 1.500 37Z"/></svg>
    </button>
    <section class="bubble continued">
      <div class="file">
        <svg class="badge" viewBox="0 0 62 78"><path class="sheet" d="M7 0H39L62 24V71Q62 78 55 78H7Q0 78 0 71V7Q0 0 7 0Z"/><path class="fold" d="M39 0L62 24H39Z"/><text x="31" y="57" text-anchor="middle">PNG</text></svg>
        <div class="details">
          <div class="name">coursera 2.png</div>
          <div class="meta">1.2 MB <span class="dot">•</span> png</div>
        </div>
      </div>
      <div class="stamp"><time>12:59 AM</time><svg class="ticks" viewBox="0 0 46 32"><path d="M3 20L10 29L31 3M19 28L22 29L43 3"/></svg></div>
    </section>
  </article>

  <article class="row sent">
    <button class="forward" type="button" aria-label="Forward">
      <svg class="share" viewBox="0 0 46 40"><path d="M1.500 37C1 19 9 11.500 22 11V2C22 .5 24 0 25 1L44.500 18Q46 20 44.500 22L25 39C24 40 22 39.500 22 38V28C13 27.500 9 29 6 37C5 40 1.500 40 1.500 37Z"/></svg>
    </button>
    <section class="bubble">
      <div class="origin"><svg class="share" viewBox="0 0 40 32"><path d="M1 30C3 16 9 9.500 24 9V2C24 .5 26 0 27 1L39 13.500Q40 15 39 16.500L27 28C26 29 24 28.500 24 27V21C13 20.500 8 24 3 30.500Q1 32 1 30Z"/></svg><em>Forwarded</em></div>
      <div class="file">
        <svg class="badge" viewBox="0 0 62 78"><path class="sheet" d="M7 0H39L62 24V71Q62 78 55 78H7Q0 78 0 71V7Q0 0 7 0Z"/><path class="fold" d="M39 0L62 24H39Z"/><text x="31" y="57" text-anchor="middle">PNG</text></svg>
        <div class="details">
          <div class="name">office.png</div>
          <div class="meta">1.6 MB <span class="dot">•</span> png</div>
        </div>
      </div>
      <div class="stamp"><time>1:31 AM</time><svg class="ticks" viewBox="0 0 46 32"><path d="M3 20L10 29L31 3M19 28L22 29L43 3"/></svg></div>
      <svg class="tail" viewBox="0 0 30 44" aria-hidden="true"><path d="M12 0C12 20 18 36 30 43C20 45 6 42 0 34Z"/></svg>
    </section>
  </article>

  <article class="row received reply">
    <section class="bubble">
      <blockquote class="quote">
        <div class="author">You</div>
        <div class="attachment"><svg class="doc" viewBox="0 0 29 34"><path d="M6 0H14V9Q14 15 20 15H29V28Q29 34 23 34H6Q0 34 0 28V6Q0 0 6 0ZM17.500 1L28 11.500H20Q17.500 11.500 17.500 9Z"/></svg><span>office.png</span></div>
      </blockquote>
      <p class="text" dir="rtl" lang="ar">يخربيت الدماغ</p>
      <div class="stamp"><time>1:57 AM</time></div>
    </section>
  </article>

  <article class="row received">
    <section class="bubble plain">
      <p class="text" dir="rtl" lang="ar">اقسم بالله بتبهرني كل مره اكتر<svg class="emoji" viewBox="0 0 62 58" role="img" aria-label="😂">
        <defs>
          <radialGradient id="face" cx=".5" cy=".35" r=".65"><stop offset="0" stop-color="#fff04a"/><stop offset=".6" stop-color="#ffd02b"/><stop offset="1" stop-color="#e8890c"/></radialGradient>
          <linearGradient id="tear" x1="0" y1="0" x2="0" y2="1"><stop offset="0" stop-color="#9be4ff"/><stop offset="1" stop-color="#1c9be8"/></linearGradient>
        </defs>
        <circle cx="31" cy="29" r="28.500" fill="url(#face)"/>
        <path d="M13 34Q31 39 49 34C49 45 41 52 31 52S13 45 13 34Z" fill="#6b3a0c"/>
        <path d="M14 35Q31 40 48 35Q48 39 46 42Q31 45 16 42Q14 39 14 35Z" fill="#fff"/>
        <path d="M12 29Q19 23 27 29M35 29Q43 23 50 29M9 22Q12 18 16 18M53 22Q50 18 46 18" fill="none" stroke="#6b3a0c" stroke-width="2.500" stroke-linecap="round"/>
        <path d="M13 29C4 32 0 37 0 42Q1 48 6 48C12 47 13 39 13 29ZM49 29C58 32 62 37 62 42Q61 48 56 48C50 47 49 39 49 29Z" fill="url(#tear)"/>
      </svg></p>
      <div class="stamp"><time>1:57 AM</time></div>
      <svg class="tail" viewBox="0 0 30 44" aria-hidden="true"><path d="M18 0C18 20 12 36 0 43C10 45 24 42 30 34Z"/></svg>
    </section>
  </article>
</main>

<div class="scroll-thumb" aria-hidden="true"></div>
<button class="jump" type="button" aria-label="Scroll to latest"><svg viewBox="0 0 38 24"><path d="M3 4L19 20L35 4"/></svg></button>
</body>
</html>
```
FILE: styles.css
```
:root {
  --night: #0a0a0a;
  --doodle: #262626;
  --sent: #194d37;
  --sent-card: #113c2a;
  --sent-muted: #9eb6ab;
  --received: #242626;
  --received-card: #1e1e1e;
  --received-muted: #9c9d9d;
  --accent: #ffd17a;
}

* { box-sizing: border-box; }

body {
  position: relative;
  min-height: 100vh;
  margin: 0;
  overflow-x: hidden;
  background: var(--night);
  color: #fff;
  font-family: Inter, "Liberation Sans", sans-serif;
}

button { padding: 0; border: 0; }
svg { display: block; flex: none; }

.wallpaper {
  position: absolute;
  inset: 0;
  width: 100%;
  height: 100%;
  fill: none;
  stroke: var(--doodle);
  stroke-width: 2;
  stroke-linecap: round;
  stroke-linejoin: round;
}
.wallpaper * { vector-effect: non-scaling-stroke; }
.dots-small circle { r: 6px; }
.dots-medium circle { r: 10px; }
.dots-large circle { r: 13px; }
.filled { fill: var(--doodle); stroke: none; }

.chat {
  position: relative;
  display: flex;
  flex-direction: column;
  gap: 14px;
  padding: 0 50px 28px;
}

.row { display: flex; align-items: flex-end; gap: 26px; }
.sent { justify-content: flex-end; }
.reply { margin-top: 26px; }

.bubble {
  position: relative;
  padding: 10px 10px 0;
  border-radius: 36px;
}
.sent .bubble { background: var(--sent); padding-top: 0; }
.sent .continued { padding-top: 4px; border-radius: 0 0 36px 36px; }
.received .bubble { background: var(--received); }
.received .plain { padding-top: 2px; }

.forward {
  display: grid;
  place-items: center;
  width: 96px;
  height: 96px;
  margin-bottom: 112px;
  border-radius: 50%;
  background: #444547;
}
.share { width: 48px; height: 40px; fill: #d9dadc; }

.origin {
  display: flex;
  align-items: center;
  gap: 16px;
  padding: 20px;
  color: var(--sent-muted);
  font-size: 38px;
  line-height: 48px;
}
.origin .share { width: 40px; height: 32px; fill: #6f9482; }

.file {
  display: flex;
  gap: 25px;
  padding: 28px 32px 35px;
  border-radius: 26px;
  background: var(--sent-card);
}
.badge { width: 62px; height: 78px; margin-top: 13px; }
.sheet { fill: #6d7578; }
.fold { fill: #a5a9ac; }
.badge text { fill: #fff; font-size: 18px; font-weight: 500; letter-spacing: 1px; }
.name { margin-bottom: 10px; font-size: 48px; line-height: 64px; }
.meta { color: var(--sent-muted); font-size: 36px; line-height: 48px; }
.dot { display: inline-block; padding: 0 4px; font-size: 24px; line-height: 24px; vertical-align: 2px; }

.stamp {
  display: flex;
  justify-content: flex-end;
  align-items: center;
  gap: 12px;
  padding: 14px 20px 12px;
  color: var(--sent-muted);
  font-size: 36px;
  line-height: 48px;
}
.ticks {
  width: 46px;
  height: 32px;
  fill: none;
  stroke: var(--sent-muted);
  stroke-width: 4;
  stroke-linecap: round;
  stroke-linejoin: round;
}
.received .stamp { padding-top: 0; color: var(--received-muted); }

.tail { position: absolute; bottom: 0; width: 30px; height: 44px; }
.sent .tail { right: -18px; fill: var(--sent); }
.received .tail { left: -18px; fill: var(--received); }

.quote {
  margin: 0;
  padding: 31px 62px 40px 41px;
  border-radius: 24px;
  background: linear-gradient(to right, var(--accent) 12px, var(--received-card) 12px);
}
.author { margin-bottom: 17px; color: var(--accent); font-size: 43px; font-weight: 600; line-height: 56px; }
.attachment {
  display: flex;
  align-items: center;
  gap: 10px;
  color: #c8c8c8;
  font-size: 38px;
  line-height: 48px;
}
.doc { width: 29px; height: 34px; fill: #8e8e8e; }

.text {
  margin: 0;
  padding: 14px 20px 21px;
  font-family: "DejaVu Sans", Inter, sans-serif;
  font-size: 45px;
  line-height: 64px;
}
.emoji { display: inline-block; width: 62px; height: 58px; vertical-align: -12px; }

.scroll-thumb {
  position: absolute;
  top: 36.3%;
  right: 9px;
  width: 9px;
  height: 14.5%;
  border-radius: 5px;
  background: #8a8a8acc;
}

.jump {
  position: absolute;
  right: 27px;
  bottom: 37px;
  display: grid;
  place-items: center;
  width: 96px;
  height: 96px;
  border-radius: 50%;
  background: var(--received);
}
.jump svg { width: 38px; height: 24px; fill: none; stroke: #fff; stroke-width: 5; stroke-linecap: round; stroke-linejoin: round; }
```
